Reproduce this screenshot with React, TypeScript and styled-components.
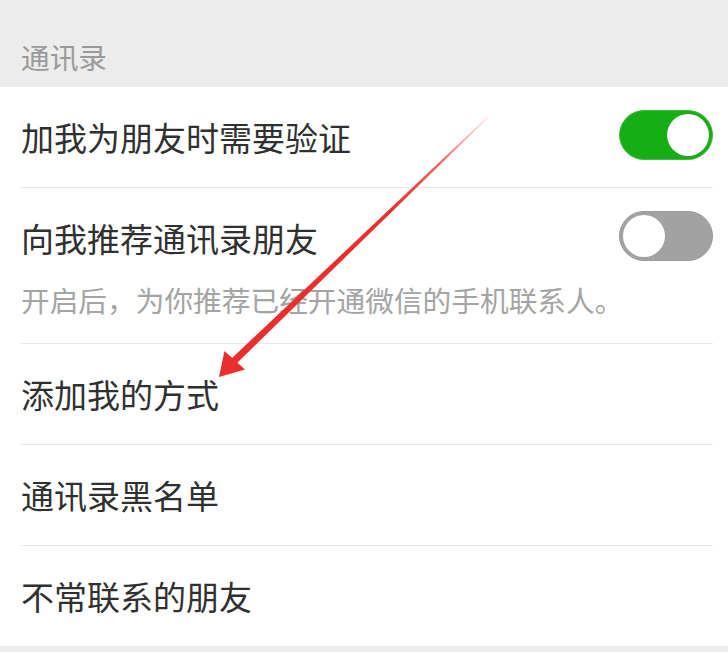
import styled, { createGlobalStyle } from "styled-components";

const GlobalStyle = createGlobalStyle`
  html, body {
    margin: 0;
    padding: 0;
    background: #ececec;
  }
  body {
    font-family: "Noto Sans CJK SC", "Noto Sans", sans-serif;
  }
`;

const Page = styled.div`
  position: relative;
  width: 728px;
  height: 652px;
  overflow: hidden;
  background: #ececec;
`;

const SectionTitle = styled.div`
  padding: 43px 0 16px 21px;
  font-size: 28.7px;
  line-height: 28px;
  color: #9a9a9a;
`;

const List = styled.div`
  background: #fff;
  padding-left: 21px;
  padding-right: 15px;
`;

const Item = styled.div<{ $last?: boolean }>`
  border-bottom: ${(p) => (p.$last ? "none" : "1px solid #e8e8e8")};
`;

const Row = styled.div`
  height: 100px;
  display: flex;
  align-items: center;
  justify-content: space-between;
`;

const Label = styled.span`
  font-size: 33px;
  line-height: 40px;
  color: #303030;
`;

const Hint = styled.div`
  margin-top: -2px;
  padding-bottom: 29px;
  font-size: 28.7px;
  line-height: 28px;
  color: #a4a4a4;
  white-space: nowrap;
`;

const Switch = styled.div<{ $on?: boolean }>`
  box-sizing: border-box;
  width: 94px;
  height: 50px;
  border-radius: 25px;
  padding: 3px;
  display: flex;
  justify-content: ${(p) => (p.$on ? "flex-end" : "flex-start")};
  background: ${(p) => (p.$on ? "#17ad17" : "#a2a2a2")};
  border: 1px solid ${(p) => (p.$on ? "#3cbf3c" : "#9a9a9a")};
  margin-top: -4px;
`;

const Knob = styled.div`
  width: 42px;
  height: 42px;
  border-radius: 50%;
  background: #fff;
`;

const Overlay = styled.svg`
  position: absolute;
  left: 0;
  top: 0;
  pointer-events: none;
`;

// red annotation arrow drawn over the list
function Arrow() {
  return (
    <Overlay width="728" height="652" viewBox="0 0 728 652">
      <defs>
        <linearGradient id="fade" x1="490" y1="115" x2="390" y2="210" gradientUnits="userSpaceOnUse">
          <stop offset="0" stopColor="#ee4a4a" stopOpacity="0.1" />
          <stop offset="0.5" stopColor="#e83535" stopOpacity="0.75" />
          <stop offset="1" stopColor="#ea2e2e" />
        </linearGradient>
      </defs>
      <polygon
        points="488.4,117.4 487.6,116.6 229.5,360.4 234.5,365.6"
        fill="url(#fade)"
      />
      <polygon points="219,377 224.5,351 245,369.5" fill="#ea2e2e" />
    </Overlay>
  );
}

export default function App() {
  return (
    <Page>
      <GlobalStyle />
      <SectionTitle>通讯录</SectionTitle>
      <List>
        <Item>
          <Row>
            <Label>加我为朋友时需要验证</Label>
            <Switch $on>
              <Knob />
            </Switch>
          </Row>
        </Item>
        <Item>
          <Row>
            <Label>向我推荐通讯录朋友</Label>
            <Switch>
              <Knob />
            </Switch>
          </Row>
          <Hint>开启后，为你推荐已经开通微信的手机联系人。</Hint>
        </Item>
        <Item>
          <Row>
            <Label>添加我的方式</Label>
          </Row>
        </Item>
        <Item>
          <Row>
            <Label>通讯录黑名单</Label>
          </Row>
        </Item>
        <Item $last>
          <Row>
            <Label>不常联系的朋友</Label>
          </Row>
        </Item>
      </List>
      <Arrow />
    </Page>
  );
}
